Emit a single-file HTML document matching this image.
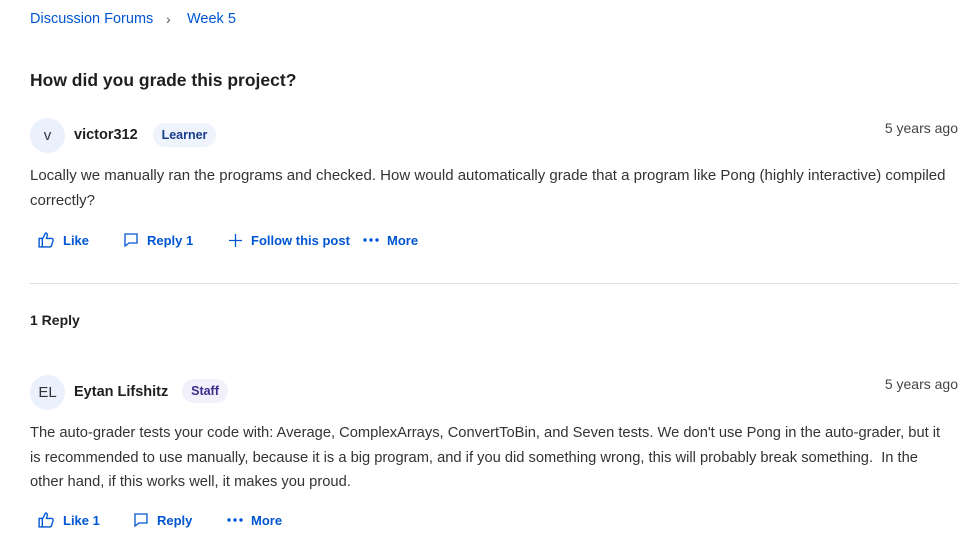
<!DOCTYPE html>
<html><head><meta charset="utf-8"><style>
*{margin:0;padding:0;box-sizing:border-box}
body{width:969px;height:546px;background:#fff;font-family:"Liberation Sans",sans-serif;color:#1f1f1f;position:relative;overflow:hidden}
.a{position:absolute;white-space:nowrap}
.bc{color:#0056d2;font-size:14.5px;top:11px}
h1{position:absolute;left:30px;top:70px;font-size:17.5px;font-weight:bold;color:#1f1f1f}
.av{position:absolute;width:35px;height:35px;border-radius:50%;background:#eaf1fd;color:#333;font-size:15px;display:flex;align-items:center;justify-content:center}
.name{font-weight:bold;font-size:14.5px}
.badge{position:absolute;height:24px;border-radius:12px;font-size:12.5px;font-weight:bold;display:flex;align-items:center;justify-content:center}
.ts{font-size:14px;color:#444;right:11px}
.body{position:absolute;left:30px;font-size:15px;line-height:24.5px;color:#333;white-space:nowrap}
.act{color:#0056d2;font-weight:bold;font-size:13px;display:flex;align-items:center;gap:8px;height:18px}
svg{stroke:#0056d2;fill:none;stroke-width:1.3}
</style></head><body>
<div class="a bc" style="left:30px">Discussion Forums</div>
<div class="a" style="left:166px;top:11px;color:#555;font-size:14px">›</div>
<div class="a bc" style="left:187px">Week 5</div>
<h1>How did you grade this project?</h1>

<div class="av" style="left:30px;top:118px">v</div>
<div class="a name" style="left:74px;top:127px">victor312</div>
<div class="badge" style="left:153px;top:123px;width:63px;background:#eef3fc;color:#1a3c8c">Learner</div>
<div class="a ts" style="top:120px">5 years ago</div>
<div class="body" style="top:164px">Locally we manually ran the programs and checked. How would automatically grade that a program like Pong (highly interactive) compiled<br>correctly?</div>

<div class="a act" style="left:37px;top:231px"><svg width="18" height="18" viewBox="0 0 17 17"><path d="M2 7h3v8H2zM5 8l3-6c1.5 0 2 1 1.6 2.5L9 7h5c1 0 1.5 1 1.2 2l-1.5 5c-.3.7-.8 1-1.5 1H5"/></svg>Like</div>
<div class="a act" style="left:123px;top:231px"><svg width="16" height="16" viewBox="0 0 16 16"><path d="M2 2h12v9H6l-4 3z"/></svg>Reply 1</div>
<div class="a act" style="left:228px;top:231px"><svg width="15" height="15" viewBox="0 0 15 15"><path d="M7.5 1v13M1 7.5h13"/></svg>Follow this post</div>
<div class="a act" style="left:363px;top:231px"><svg width="16" height="6" viewBox="0 0 16 6" style="fill:#0056d2;stroke:none"><circle cx="2" cy="3" r="1.7"/><circle cx="8" cy="3" r="1.7"/><circle cx="14" cy="3" r="1.7"/></svg>More</div>

<div class="a" style="left:30px;top:283px;width:928px;height:1px;background:#ddd"></div>
<div class="a" style="left:30px;top:312px;font-weight:bold;font-size:14px">1 Reply</div>

<div class="av" style="left:30px;top:375px">EL</div>
<div class="a name" style="left:74px;top:384px">Eytan Lifshitz</div>
<div class="badge" style="left:182px;top:379px;width:46px;background:#f2f0fb;color:#3b2b8c">Staff</div>
<div class="a ts" style="top:376px">5 years ago</div>
<div class="body" style="top:421px;font-size:14.7px">The auto-grader tests your code with: Average, ComplexArrays, ConvertToBin, and Seven tests. We don't use Pong in the auto-grader, but it<br>is recommended to use manually, because it is a big program, and if you did something wrong, this will probably break something.&nbsp; In the<br>other hand, if this works well, it makes you proud.</div>

<div class="a act" style="left:37px;top:511px"><svg width="18" height="18" viewBox="0 0 17 17"><path d="M2 7h3v8H2zM5 8l3-6c1.5 0 2 1 1.6 2.5L9 7h5c1 0 1.5 1 1.2 2l-1.5 5c-.3.7-.8 1-1.5 1H5"/></svg>Like 1</div>
<div class="a act" style="left:133px;top:511px"><svg width="16" height="16" viewBox="0 0 16 16"><path d="M2 2h12v9H6l-4 3z"/></svg>Reply</div>
<div class="a act" style="left:227px;top:511px"><svg width="16" height="6" viewBox="0 0 16 6" style="fill:#0056d2;stroke:none"><circle cx="2" cy="3" r="1.7"/><circle cx="8" cy="3" r="1.7"/><circle cx="14" cy="3" r="1.7"/></svg>More</div>
</body></html>
